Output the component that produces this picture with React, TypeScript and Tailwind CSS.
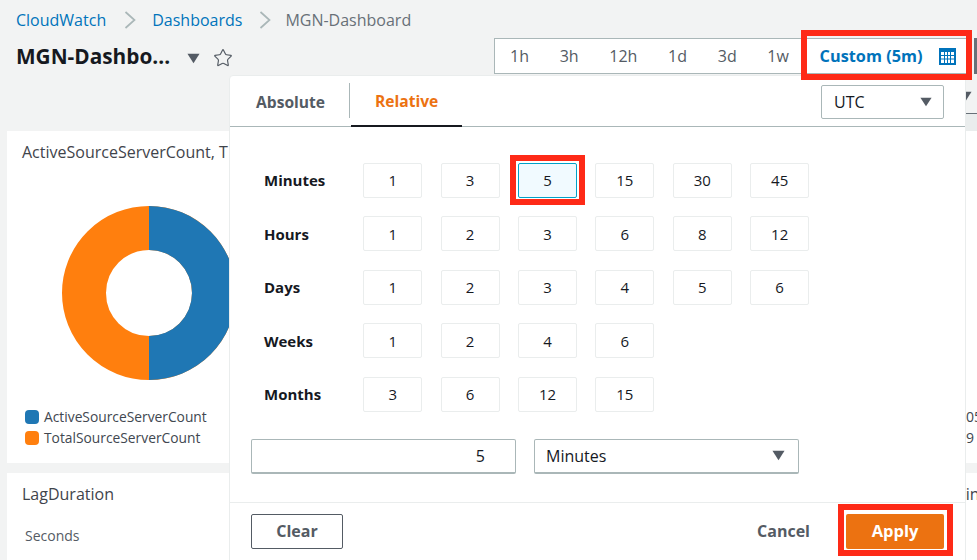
import { Star } from 'lucide-react';

const ranges = ['1h', '3h', '12h', '1d', '3d', '1w'];
const rows = [
  { label: 'Minutes', values: ['1', '3', '5', '15', '30', '45'] },
  { label: 'Hours', values: ['1', '2', '3', '6', '8', '12'] },
  { label: 'Days', values: ['1', '2', '3', '4', '5', '6'] },
  { label: 'Weeks', values: ['1', '2', '4', '6'] },
  { label: 'Months', values: ['3', '6', '12', '15'] },
];

function Caret({ className }: { className: string }) {
  return (
    <svg viewBox="0 0 14 11" className={className} fill="#545b64">
      <path d="M0.5 0.5h13L7 10.5z" />
    </svg>
  );
}

function Chevron({ className }: { className: string }) {
  return (
    <svg viewBox="0 0 12 18" className={className} fill="none" stroke="#aab7b8" strokeWidth="1.7">
      <path d="M1.5 1 10.5 9l-9 8" />
    </svg>
  );
}

function CalendarIcon() {
  return (
    <svg viewBox="0 0 17 17" className="ml-[17px] h-[17px] w-[17px]" fill="none">
      <rect x="1" y="1" width="15" height="15" stroke="#0073bb" strokeWidth="2" />
      <rect x="1" y="1" width="15" height="3" fill="#0073bb" />
      <path d="M5.5 4v11M8.5 4v11M11.5 4v11M2 7.5h13M2 11h13" stroke="#0073bb" strokeWidth="1" />
    </svg>
  );
}

export default function App() {
  return (
    <div
      className="relative h-[560px] w-[977px] overflow-hidden bg-[#f2f3f3] text-[#16191f]"
      style={{ fontFamily: '"Open Sans", "Noto Sans", sans-serif' }}
    >
      {/* header */}
      <div className="flex h-[39px] items-center pl-[16px] text-[16px]">
        <span className="text-[#0073bb]">CloudWatch</span>
        <Chevron className="ml-[18px] mr-[16px] h-[18px] w-[12px]" />
        <span className="text-[#0073bb]">Dashboards</span>
        <Chevron className="ml-[17px] mr-[14px] h-[18px] w-[12px]" />
        <span className="text-[#687078]">MGN-Dashboard</span>
      </div>
      <div className="flex h-[36px] items-center pl-[16px]">
        <span className="w-[171px] text-[20.8px] font-bold whitespace-nowrap">MGN-Dashbo...</span>
        <Caret className="mt-[2px] h-[11px] w-[13px]" />
        <Star className="ml-[13px] mt-[2px] h-[20px] w-[20px] text-[#545b64]" strokeWidth={1.4} />
      </div>

      {/* background widgets */}
      <div className="ml-[7px] mt-[56px] flex h-[332px] flex-col bg-white pl-[15px] pt-[9px]">
        <div className="text-[16px] whitespace-nowrap text-[#3f444b]">ActiveSourceServerCount, T</div>
        <svg viewBox="0 0 174 174" className="ml-[40px] mt-[42px] h-[174px] w-[174px]">
          <circle cx="87" cy="87" r="65" fill="none" stroke="#ff7f0e" strokeWidth="44" />
          <path d="M87 0a87 87 0 0 1 0 174v-44a43 43 0 0 0 0-86z" fill="#1f77b4" />
        </svg>
        <div className="mt-[26px] flex items-center text-[13.8px] leading-[21px] text-[#414750]">
          <span className="ml-[3px] mr-[5px] h-[14px] w-[14px] rounded-[4px] bg-[#1f77b4]" />
          ActiveSourceServerCount
        </div>
        <div className="flex items-center text-[13.8px] leading-[21px] text-[#414750]">
          <span className="ml-[3px] mr-[5px] h-[14px] w-[14px] rounded-[4px] bg-[#ff7f0e]" />
          TotalSourceServerCount
        </div>
      </div>
      <div className="ml-[7px] mt-[10px] h-[120px] bg-white pl-[15px] pt-[9px]">
        <div className="text-[16px] text-[#3f444b]">LagDuration</div>
        <div className="mt-[19px] pl-[3px] text-[14px] text-[#545b64]">Seconds</div>
      </div>

      {/* bits of the page showing to the right of the popover */}
      <div className="absolute left-[974px] top-[38px] h-[36px] w-[3px] bg-[#687078]" />
      <Caret className="absolute left-[959px] top-[91px] h-[11px] w-[13px]" />
      <div className="absolute left-[966px] top-[113px] h-[18px] w-[11px] border-t border-[#687078] bg-[#eaeded]" />
      <span className="absolute left-[966px] top-[406px] text-[14px] text-[#414750]">05</span>
      <span className="absolute left-[958px] top-[427px] text-[14px] text-[#414750]">09</span>
      <span className="absolute left-[951px] top-[482px] text-[16px] text-[#3f444b]">min</span>

      {/* time range bar */}
      <div className="absolute left-[494px] top-[38px] flex h-[36px] w-[477px] items-center gap-[30.7px] border border-[#aab7b8] bg-white pl-[15px] text-[16px] text-[#545b64]">
        {ranges.map((range) => (
          <span key={range}>{range}</span>
        ))}
        <span className="flex items-center whitespace-nowrap text-[16.3px] font-bold text-[#0073bb]">
          Custom (5m)
          <CalendarIcon />
        </span>
      </div>

      {/* popover */}
      <div className="absolute left-[229px] top-[75px] h-[490px] w-[737px] rounded-tl-[4px] border border-[#eaeded] bg-white">
        <div className="flex h-[51px] items-end border-b border-[#aab7b8] pl-[26px]">
          <span className="mb-[12px] text-[15.6px] font-bold text-[#545b64]">Absolute</span>
          <span className="mb-[8px] ml-[24px] h-[35px] w-px bg-[#aab7b8]" />
          <span className="-mb-px ml-[1px] w-[111px] border-b-2 border-[#16191f] pb-[12px] pl-[24px] text-[15.6px] font-bold text-[#ec7211]">
            Relative
          </span>
          <div className="mb-[7px] ml-auto mr-[21px] flex h-[34px] w-[123px] items-center justify-between rounded-[2px] border border-[#aab7b8] pl-[12px] pr-[11px] text-[16px]">
            UTC
            <Caret className="h-[10px] w-[12px]" />
          </div>
        </div>

        <div className="flex flex-col gap-[18.5px] pl-[34px] pt-[35.9px]">
          {rows.map((row) => (
            <div key={row.label} className="flex items-center">
              <span className="w-[99.2px] text-[15px] font-bold">{row.label}</span>
              <div className="flex gap-[18.4px]">
                {row.values.map((value, index) => {
                  const selected = row.label === 'Minutes' && value === '5';
                  return (
                    <span
                      key={`${value}-${index}`}
                      className={
                        selected
                          ? 'relative flex h-[35px] w-[59px] items-center justify-center rounded-[2px] border border-[#00a1c9] bg-[#f1faff] text-[15px]'
                          : 'flex h-[35px] w-[59px] items-center justify-center rounded-[2px] border border-[#eaeded] text-[15px]'
                      }
                    >
                      {value}
                      {selected && (
                        <span className="absolute -bottom-[8px] -left-[9px] -right-[9px] -top-[9px] border-[6px] border-[#fe2a17]" />
                      )}
                    </span>
                  );
                })}
              </div>
            </div>
          ))}
        </div>

        <div className="mt-[27.1px] flex gap-[18px] pl-[21px]">
          <div className="flex h-[35px] w-[265px] items-center justify-end rounded-[2px] border border-b-2 border-[#aab7b8] pr-[30px] text-[16px]">
            5
          </div>
          <div className="flex h-[35px] w-[265px] items-center justify-between rounded-[2px] border border-b-2 border-[#aab7b8] pl-[11px] pr-[13px] text-[16px]">
            Minutes
            <Caret className="h-[11px] w-[13px]" />
          </div>
        </div>

        <div className="mt-[28px] flex border-t border-[#eaeded] pl-[21px] pt-[11px]">
          <button className="h-[35px] w-[92px] rounded-[2px] border border-[#545b64] text-[16px] font-bold text-[#545b64]">
            Clear
          </button>
          <span className="ml-auto self-center text-[16px] font-bold text-[#545b64]">Cancel</span>
          <button className="relative ml-[36px] mr-[21px] h-[35px] w-[98px] rounded-[2px] bg-[#ec7211] text-[16.5px] font-bold text-white">
            Apply
            <span className="absolute -bottom-[7px] -left-[8px] -right-[9px] -top-[10px] border-[6px] border-[#fe2a17]" />
          </button>
        </div>
      </div>

      {/* red highlight over the custom range */}
      <div className="absolute left-[801px] top-[30px] h-[50px] w-[171px] border-[6px] border-[#fe2a17]" />
    </div>
  );
}
